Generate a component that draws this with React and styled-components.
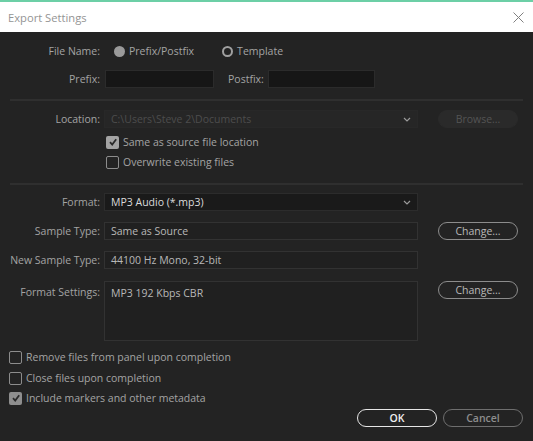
import React from "react";
import styled, { createGlobalStyle } from "styled-components";

const GlobalStyle = createGlobalStyle`
  html, body {
    margin: 0;
    padding: 0;
    background: #232323;
  }
  body {
    font-family: "Open Sans", "Liberation Sans", sans-serif;
    font-size: 10.5px;
  }
`;

const Window = styled.div`
  width: 533px;
  height: 441px;
  display: flex;
  flex-direction: column;
  overflow: hidden;
  background: #232323;
`;

const TopLine = styled.div`
  height: 2px;
  background: #6ccfa6;
`;

const TitleBar = styled.div`
  height: 30px;
  background: #ffffff;
  display: flex;
  align-items: center;
  justify-content: space-between;
  padding: 0 8px;
`;

const Title = styled.span`
  font-family: "Open Sans", "Liberation Sans", sans-serif;
  font-size: 11.2px;
  color: #949494;
`;

const CloseBtn = styled.div`
  width: 12px;
  height: 12px;
  display: flex;
  align-items: center;
  justify-content: center;
  margin-right: 1px;
`;

const Body = styled.div`
  flex: 1;
  background: #232323;
  display: flex;
  flex-direction: column;
`;

const Row = styled.div`
  display: flex;
  align-items: ${(p) => (p.$top ? "flex-start" : "center")};
  min-height: 18px;
  margin-top: ${(p) => p.$mt || 0}px;
`;

const Label = styled.div`
  width: 100px;
  margin-right: 4px;
  text-align: right;
  color: #a4a4a4;
  line-height: 18px;
  white-space: nowrap;
  padding-top: ${(p) => p.$pt || 0}px;
  flex-shrink: 0;
`;

const Divider = styled.div`
  height: 2px;
  margin: ${(p) => p.$mt}px 10px 0;
  background: #2f2f2f;
`;

const RadioGroup = styled.label`
  display: flex;
  align-items: center;
  gap: 4px;
  color: #a4a4a4;
  margin-left: ${(p) => p.$ml}px;
`;

const RadioDot = styled.span`
  width: 11px;
  height: 11px;
  border-radius: 50%;
  box-sizing: border-box;
  background: ${(p) => (p.$on ? "#9a9a9a" : "transparent")};
  border: ${(p) => (p.$on ? "none" : "2px solid #a0a0a0")};
`;

const TextInput = styled.div`
  width: ${(p) => p.$w}px;
  height: 18px;
  box-sizing: border-box;
  background: #161616;
  border: 1px solid #2b2b2b;
  margin-left: ${(p) => p.$ml || 0}px;
`;

const SmallLabel = styled.span`
  color: #a4a4a4;
  margin-left: ${(p) => p.$ml || 0}px;
  margin-right: 4px;
`;

const Field = styled.div`
  width: 314px;
  height: ${(p) => p.$h || 18}px;
  box-sizing: border-box;
  display: flex;
  align-items: ${(p) => (p.$h ? "flex-start" : "center")};
  padding: ${(p) => (p.$h ? "2px 6px 0" : "0 6px")};
  line-height: 18px;
  background: ${(p) => p.$bg || "#202020"};
  border: 1px solid ${(p) => p.$border || "#323232"};
  color: ${(p) => p.$color || "#b8b8b8"};
  flex-shrink: 0;
`;

const FieldText = styled.span`
  flex: 1;
  white-space: nowrap;
`;

const PillButton = styled.div`
  width: 80px;
  height: 18px;
  box-sizing: border-box;
  border-radius: 10px;
  display: flex;
  align-items: center;
  justify-content: center;
  margin-left: ${(p) => p.$ml || 0}px;
  border: 1.5px solid ${(p) => p.$border};
  background: ${(p) => p.$bg || "transparent"};
  color: ${(p) => p.$color};
  font-weight: ${(p) => (p.$bold ? 600 : 400)};
  flex-shrink: 0;
`;

const CheckRow = styled.label`
  display: flex;
  align-items: center;
  height: 18px;
  margin-top: ${(p) => p.$mt || 0}px;
  margin-left: ${(p) => p.$ml}px;
  color: #a4a4a4;
  gap: 4px;
`;

const Box = styled.span`
  width: 13px;
  height: 13px;
  box-sizing: border-box;
  border-radius: 2px;
  display: flex;
  align-items: center;
  justify-content: center;
  background: ${(p) => (p.$on ? p.$fill || "#a3a3a3" : "transparent")};
  border: ${(p) => (p.$on ? "none" : "1px solid #8c8c8c")};
`;

const Footer = styled.div`
  display: flex;
  justify-content: flex-end;
  gap: 6px;
  padding-right: 10px;
  margin-top: 2px;
  height: 20px;
`;

function Chevron() {
  return (
    <svg width="8" height="5" viewBox="0 0 8 5">
      <polyline points="1,1 4,4 7,1" fill="none" stroke="#9a9a9a" strokeWidth="1.2" />
    </svg>
  );
}

function Check({ on, fill }) {
  return (
    <Box $on={on} $fill={fill}>
      {on && (
        <svg width="10" height="10" viewBox="0 0 10 10">
          <polyline points="2,5.2 4.2,7.5 8.2,2.3" fill="none" stroke="#2a2a2a" strokeWidth="1.8" />
        </svg>
      )}
    </Box>
  );
}

export default function App() {
  return (
    <Window>
      <GlobalStyle />
      <TopLine />
      <TitleBar>
        <Title>Export Settings</Title>
        <CloseBtn>
          <svg width="11" height="11" viewBox="0 0 11 11">
            <path d="M0.5 0.5 L10.5 10.5 M10.5 0.5 L0.5 10.5" stroke="#808080" strokeWidth="1" />
          </svg>
        </CloseBtn>
      </TitleBar>
      <Body>
        <Row $mt={10}>
          <Label>File Name:</Label>
          <RadioGroup $ml={10}>
            <RadioDot $on />
            Prefix/Postfix
          </RadioGroup>
          <RadioGroup $ml={28}>
            <RadioDot />
            Template
          </RadioGroup>
        </Row>
        <Row $mt={10}>
          <Label>Prefix:</Label>
          <TextInput $w={109} $ml={1} />
          <SmallLabel $ml={14}>Postfix:</SmallLabel>
          <TextInput $w={107} />
        </Row>

        <Divider $mt={11} />

        <Row $mt={9}>
          <Label>Location:</Label>
          <Field $bg="#262626" $border="#282828" $color="#4d4d4d">
            <FieldText>C:\Users\Steve 2\Documents</FieldText>
            <Chevron />
          </Field>
          <PillButton $ml={20} $border="#2a2a2a" $bg="#2a2a2a" $color="#545454">
            Browse...
          </PillButton>
        </Row>
        <CheckRow $mt={5} $ml={106}>
          <Check on />
          Same as source file location
        </CheckRow>
        <CheckRow $mt={2} $ml={106}>
          <Check />
          Overwrite existing files
        </CheckRow>

        <Divider $mt={12} />

        <Row $mt={8}>
          <Label>Format:</Label>
          <Field $bg="#1a1a1a" $border="#2c2c2c" $color="#dadada">
            <FieldText>MP3 Audio (*.mp3)</FieldText>
            <Chevron />
          </Field>
        </Row>
        <Row $mt={11}>
          <Label>Sample Type:</Label>
          <Field>
            <FieldText>Same as Source</FieldText>
          </Field>
          <PillButton $ml={20} $border="#8c8c8c" $color="#b9b9b9">
            Change...
          </PillButton>
        </Row>
        <Row $mt={11}>
          <Label>New Sample Type:</Label>
          <Field>
            <FieldText>44100 Hz Mono, 32-bit</FieldText>
          </Field>
        </Row>
        <Row $mt={12} $top>
          <Label $pt={2}>Format Settings:</Label>
          <Field $h={60}>
            <FieldText>MP3 192 Kbps CBR</FieldText>
          </Field>
          <PillButton $ml={20} $border="#8c8c8c" $color="#b9b9b9">
            Change...
          </PillButton>
        </Row>

        <CheckRow $mt={7} $ml={9}>
          <Check />
          Remove files from panel upon completion
        </CheckRow>
        <CheckRow $mt={3} $ml={9}>
          <Check />
          Close files upon completion
        </CheckRow>
        <CheckRow $mt={2} $ml={9}>
          <Check on fill="#8e8e8e" />
          Include markers and other metadata
        </CheckRow>

        <Footer>
          <PillButton $border="#e6e6e6" $color="#f0f0f0" $bold>
            OK
          </PillButton>
          <PillButton $border="#6e6e6e" $color="#8d8d8d" $bold>
            Cancel
          </PillButton>
        </Footer>
      </Body>
    </Window>
  );
}
